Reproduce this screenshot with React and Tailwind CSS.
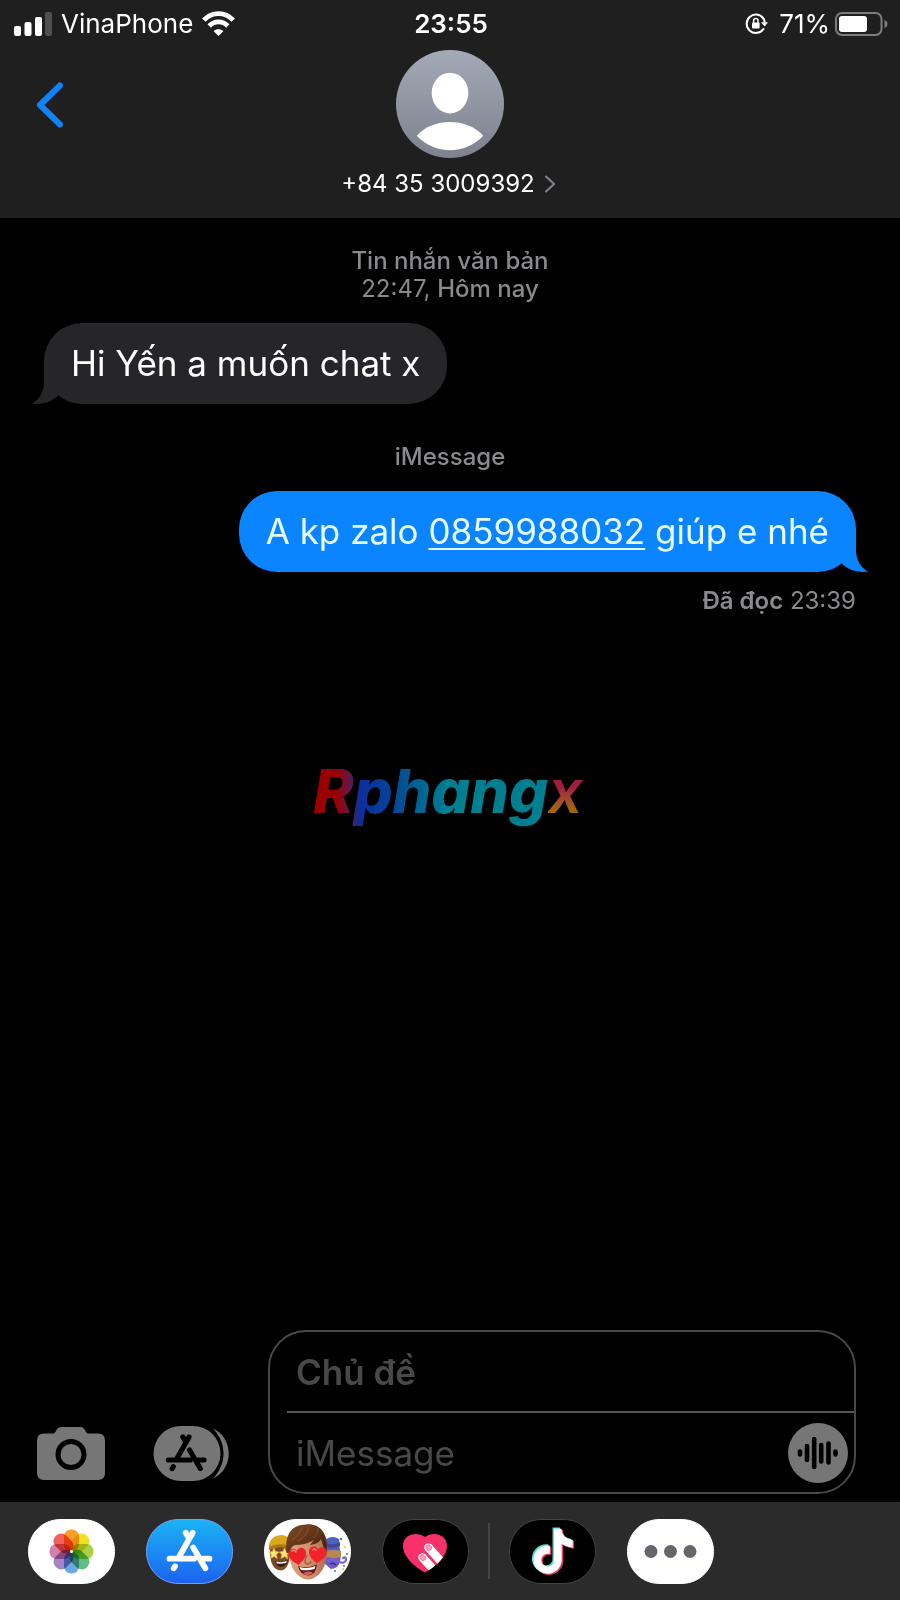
import React, { useState } from 'react'
import { clsx } from 'clsx'

const TIKTOK_NOTE = 'M12.525.02c1.31-.02 2.61-.01 3.91-.02.08 1.53.63 3.09 1.75 4.17 1.12 1.11 2.7 1.62 4.24 1.79v4.03c-1.44-.05-2.89-.35-4.2-.97-.57-.26-1.1-.59-1.62-.93-.01 2.92.01 5.84-.02 8.75-.08 1.4-.54 2.79-1.35 3.94-1.31 1.92-3.58 3.17-5.91 3.21-1.43.08-2.86-.31-4.08-1.03-2.02-1.19-3.44-3.37-3.65-5.71-.02-.5-.03-1-.01-1.49.18-1.9 1.12-3.72 2.58-4.96 1.66-1.44 3.98-2.13 6.15-1.72.02 1.48-.04 2.96-.04 4.44-.99-.32-2.15-.23-3.02.37-.63.41-1.11 1.04-1.36 1.75-.21.51-.15 1.07-.14 1.61.24 1.64 1.82 3.02 3.5 2.87 1.12-.01 2.19-.66 2.77-1.61.19-.33.4-.67.41-1.06.1-1.79.06-3.57.07-5.36.01-4.03-.01-8.05.02-12.07z'

const HEART = 'M0 10C-6 6-10 2-10-3C-10-9-3-11 0-6C3-11 10-9 10-3C10 2 6 6 0 10Z'

const PETALS = ['#f79a1e', '#efdf1c', '#a5cf3d', '#5cb87a', '#64a5dc', '#a07fc0', '#cf7ba8', '#ef5a52']

function SignalIcon() {
  return (
    <svg viewBox="0 0 38 24" className="h-6 w-[38px]" fill="#fff">
      <rect x="0" y="14" width="7" height="10" rx="2" />
      <rect x="10.5" y="10" width="7" height="14" rx="2" />
      <rect x="21" y="5" width="7" height="19" rx="2" />
      <rect x="31" y="0" width="7" height="24" rx="2" fill="#505050" />
    </svg>
  )
}

function WifiIcon() {
  return (
    <svg viewBox="0 0 33 25" className="h-[25px] w-[33px]" fill="none" stroke="#fff" strokeWidth="4.8">
      <path d="M1.8 9.2C10 .4 23 .4 31.2 9.2" />
      <path d="M7.2 15C12.500 9.600 20.500 9.600 25.800 15" />
      <path d="M16.500 25l-4.800-4.800c2.600-2.600 7-2.600 9.600 0z" fill="#fff" stroke="none" />
    </svg>
  )
}

function RotationLockIcon() {
  return (
    <svg viewBox="0 0 23 22" className="h-[22px] w-[23px]" fill="none" stroke="#fff">
      <path d="M18.3 5.3A9.2 9.2 0 1 0 18.4 16" strokeWidth="2" strokeLinecap="round" />
      <path d="M18.3 5.3q1.2 1.8 1.4 4" strokeWidth="2" />
      <path d="M16 9.2h7l-3.4 4.4z" fill="#fff" stroke="none" />
      <rect x="7" y="9.5" width="7.6" height="6" rx="1" fill="#fff" stroke="none" />
      <path d="M8.6 10V7.8a2.2 2.2 0 0 1 4.4 0V10" strokeWidth="1.5" />
    </svg>
  )
}

function BatteryIcon() {
  return (
    <svg viewBox="0 0 53 24" className="h-6 w-[53px]">
      <rect x="1" y="1" width="45.5" height="22" rx="6" fill="none" stroke="#7d7d7d" strokeWidth="2" />
      <rect x="4" y="4" width="28" height="16" rx="3" fill="#fff" />
      <path d="M49.5 8c4 1.2 4 6.800 0 8z" fill="#7d7d7d" />
    </svg>
  )
}

function Avatar() {
  return (
    <svg viewBox="0 0 109 109" className="size-[108px]">
      <defs>
        <linearGradient id="avatar" x1="0" y1="0" x2="0" y2="1">
          <stop offset="0" stopColor="#a4a9b7" />
          <stop offset="1" stopColor="#7e828e" />
        </linearGradient>
      </defs>
      <circle cx="54.5" cy="54.5" r="54.5" fill="url(#avatar)" />
      <ellipse cx="54.5" cy="43.500" rx="18.500" ry="20.500" fill="#fff" />
      <path d="M21 86.500C37 68 72 68 88 86.500C70 106 39 106 21 86.500Z" fill="#fff" />
    </svg>
  )
}

function Tail({ className }) {
  return (
    <svg viewBox="0 0 30 40" className={clsx('absolute bottom-0 h-[40px] w-[30px]', className)} fill="currentColor">
      <path d="M12 0V18C12 28 7 36 0 39.500C10 41 20 38 26 31.500L30 0Z" />
    </svg>
  )
}

function Bubble({ mine, children }) {
  return (
    <div className={clsx('relative flex h-[81px] items-center rounded-[38px] px-[27px] text-[35px]', mine ? 'self-end bg-[#0a84ff] text-[#e6fcff]' : 'self-start bg-[#262628] text-white')}>
      <Tail className={mine ? '-right-3 -scale-x-100 text-[#0a84ff]' : '-left-3 text-[#262628]'} />
      <p className="relative whitespace-nowrap">{children}</p>
    </div>
  )
}

function CameraIcon() {
  return (
    <svg viewBox="0 0 68 53" className="h-[53px] w-[68px]">
      <path d="M7 6.500H16.500C19 6.500 19 0 24.500 0H43C48.500 0 48.500 6.500 51 6.500H61Q68 6.500 68 13.500V46Q68 53 61 53H7Q0 53 0 46V13.500Q0 6.500 7 6.500Z" fill="#767676" />
      <circle cx="34" cy="27.500" r="13" fill="none" stroke="#000" strokeWidth="5" />
    </svg>
  )
}

function AppStoreMark() {
  return (
    <g fill="none" stroke="currentColor" strokeWidth="5.8" strokeLinecap="round">
      <path d="M46.700 13.700L32.500 39" />
      <path d="M39.700 13.700L42.500 18.500" />
      <path d="M29 47.200L27.700 49.300" />
      <path d="M47.200 28.500L59.300 49.300" />
      <path d="M23.500 39.700H48" />
      <path d="M57 39.700H63.500" />
    </g>
  )
}

function DrawerIcon() {
  return (
    <svg viewBox="0 0 76 55" className="h-[55px] w-[76px]">
      <path d="M28 0H40A27.500 27.500 0 0 1 40 55H28A27.500 27.500 0 0 1 28 0Z" fill="#767676" />
      <path d="M60 2.500C81 12 81 43 60 52.500C74 38 74 17 60 2.500Z" fill="#767676" />
      <g transform="translate(-5.500 -1.300) scale(.89)" className="text-black">
        <AppStoreMark />
      </g>
    </svg>
  )
}

function VoiceIcon() {
  return (
    <svg viewBox="0 0 60 60" className="size-[60px]">
      <circle cx="30" cy="30" r="30" fill="#767676" />
      <g stroke="#000" strokeWidth="4.600" strokeLinecap="round">
        <path d="M12 28.500V31.500M19 23V37M26.200 16V44M33.200 22V38.500M40.500 20.500V39.500M47.500 28.500V31.500" />
      </g>
    </svg>
  )
}

function Pill({ children, fill, stroke }) {
  return (
    <svg viewBox="0 0 87 65" className="h-[65px] w-[87px]">
      <path d="M33 .5H54C74 .5 86.500 16 86.500 32.500S74 64.500 54 64.500H33C13 64.500 .5 49 .5 32.500S13 .5 33 .5Z" fill={fill} stroke={stroke} />
      {children}
    </svg>
  )
}

function PhotosApp() {
  return (
    <Pill fill="#fff" stroke="#fff">
      <g transform="translate(43.500 32.500)" className="isolate">
        {PETALS.map((color, i) => (
          <rect key={color} x="-7.500" y="-22" width="15" height="21.500" rx="7" fill={color} fillOpacity=".95" transform={`rotate(${i * 45})`} className="mix-blend-multiply" />
        ))}
        <circle r="1.500" fill="#fff" />
      </g>
    </Pill>
  )
}

function AppStoreApp() {
  return (
    <Pill fill="url(#store)" stroke="#7c9ff0">
      <defs>
        <linearGradient id="store" x1="0" y1="0" x2="0" y2="1">
          <stop offset="0" stopColor="#19b4f5" />
          <stop offset="1" stopColor="#1c62f0" />
        </linearGradient>
      </defs>
      <g className="text-white"><AppStoreMark /></g>
    </Pill>
  )
}

function MemojiApp() {
  return (
    <Pill fill="#fff" stroke="#fff">
      <defs>
        <linearGradient id="hair" x1="0" y1="0" x2="1" y2="1">
          <stop offset="0" stopColor="#7d4a28" />
          <stop offset=".5" stopColor="#633518" />
          <stop offset="1" stopColor="#3f200f" />
        </linearGradient>
        <linearGradient id="skin" x1="0" y1="0" x2="1" y2="0">
          <stop offset="0" stopColor="#dfa380" />
          <stop offset=".6" stopColor="#cd8e6b" />
          <stop offset="1" stopColor="#a96b4b" />
        </linearGradient>
      </defs>

      {/* star-eyed friend in the yellow beanie */}
      <path d="M6 28Q5 51 17 51.500Q26 51 27 28Z" fill="#7a4a2a" />
      <path d="M5 30C4 20 11 16 18 16Q25 17 27 22V28Q16 24 5 30Z" fill="#dba51c" />
      <path d="M5 28Q15 23 27 27V30Q15 26 5 31Z" fill="#a97a0e" />
      <path d="M11 42Q18 44 24 41Q22 48 17 48Q12 47 11 42Z" fill="#3d1a10" />
      <path d="M12 42.500Q18 44 23 42L22 44Q17 45 13 44.500Z" fill="#fff" />
      <path d="M10 29l1.500 3.500 3.500.5-2.500 2.500.7 4-3.200-2-3.500 2 .8-4L5 33l3.500-.5zM20.500 29l1.500 3.500 3.500.5-2.500 2.500.7 4-3.200-2-3.500 2 .8-4-2.300-2.500 3.500-.5z" fill="#ffe27a" stroke="#e5b030" strokeWidth=".8" />

      {/* wizard on the right */}
      <path d="M62 20Q69 16 75 20L76 32H62Z" fill="#5260bd" />
      <path d="M62 24Q69 27 76 23V27Q69 30 62 28Z" fill="#3e489b" />
      <path d="M61 31H76Q79 49 67 50L61 45Z" fill="#6d5ac8" />
      <path d="M62 32Q70 30 77 32V38Q70 40 62 38Z" fill="#b7894c" />
      <path d="M64 42Q70 38 75 43Q81 45 82 41Q82 37 79 39" fill="none" stroke="#7664d6" strokeWidth="2.200" strokeLinecap="round" />
      <path d="M66 45Q69 43 72 46" fill="none" stroke="#3c2a91" strokeWidth="1.500" />
      <g fill="#3b71d9">
        <circle cx="77" cy="20" r="1.200" />
        <circle cx="83" cy="35" r=".9" />
        <circle cx="71" cy="52" r="1" />
        <circle cx="80" cy="47" r=".9" />
      </g>
      <g fill="#ecc746">
        <circle cx="81" cy="28" r="1.100" />
        <circle cx="79" cy="50" r="1.100" />
        <circle cx="84" cy="44" r=".8" />
      </g>

      {/* heart-eyed face */}
      <path d="M25 25Q23 33 26 42Q29 54 38 59Q44 62 50 59Q60 53 62 41Q65 32 62 22Q45 12 25 25Z" fill="url(#skin)" />
      <path d="M22.500 34C21 17 26 6 42 5.500C57 4 65 16 62.500 33L59.500 28Q58 24 57 20Q55 25 46 26L50 21Q42 26 31 26Q26 28 25.500 34Z" fill="url(#hair)" />
      <path d="M28 21Q34 18 38 9M34 22Q43 17 45 8M50 19Q54 15 54 9" fill="none" stroke="#a0683c" strokeWidth="1" opacity=".6" />
      <path d="M43 36Q39 44 43 45Q47 45 47 42" fill="none" stroke="#a76045" strokeWidth="1.600" />
      <path d="M34 47Q43 50 53 45.500Q52 56 44 56.500Q36 56 34 47Z" fill="#641917" />
      <path d="M35.500 48Q43 50.500 51.500 47L50.500 50Q44 52 37 51Z" fill="#fff" />
      <path d="M39 54.500Q44 51 49 54Q44 58 39 54.500Z" fill="#d65b61" />
      <path d={HEART} transform="translate(33.500 37) rotate(-6) scale(.88)" fill="#ec2027" />
      <path d={HEART} transform="translate(53.500 35.500) rotate(6) scale(.88)" fill="#f0242b" />
      <path d="M28 32Q30 30 32 33M49 31Q50 29 52 31" fill="none" stroke="#ff8585" strokeWidth="1.500" strokeLinecap="round" />
    </Pill>
  )
}

function TouchApp() {
  return (
    <Pill fill="#000" stroke="#444">
      <clipPath id="heart">
        <path d="M43 53.500C34 49 21 38 21 27C21 15 35 12 43 18C51 12 65 15 65 27C65 38 52 49 43 53.500Z" />
      </clipPath>
      <g clipPath="url(#heart)">
        <rect width="87" height="65" fill="#f9316b" />
        {['translate(47 29) rotate(-42)', 'translate(41 39) rotate(-42)'].map((place) => (
          <g key={place} transform={place}>
            <rect x="-4.200" y="-5" width="8.400" height="30" rx="4.200" fill="#fff" />
            <rect x="-2.600" y="-3.500" width="5.200" height="6" rx="2.500" fill="#fb9dbc" stroke="#f05585" strokeWidth=".7" />
          </g>
        ))}
      </g>
    </Pill>
  )
}

function TikTokApp() {
  return (
    <Pill fill="#000" stroke="#444">
      <g transform="translate(20 8.500) scale(1.880)">
        <path d={TIKTOK_NOTE} fill="#4fe0d5" />
        <path d={TIKTOK_NOTE} fill="#e73e5f" transform="translate(1.600 1.200)" />
        <path d={TIKTOK_NOTE} fill="#fff" transform="translate(.8 .6)" />
      </g>
    </Pill>
  )
}

function MoreApp() {
  return (
    <Pill fill="#fff" stroke="#fff">
      <g fill="#65656b">
        <circle cx="24" cy="32.500" r="6.500" />
        <circle cx="43.500" cy="32.500" r="6.500" />
        <circle cx="63" cy="32.500" r="6.500" />
      </g>
    </Pill>
  )
}

const apps = [
  { id: 'photos', label: 'Ảnh', icon: PhotosApp },
  { id: 'store', label: 'App Store', icon: AppStoreApp },
  { id: 'memoji', label: 'Memoji', icon: MemojiApp },
  { id: 'touch', label: 'Digital Touch', icon: TouchApp },
]

const moreApps = [
  { id: 'tiktok', label: 'TikTok', icon: TikTokApp },
  { id: 'more', label: 'Thêm', icon: MoreApp },
]

function AppButton({ app }) {
  const Icon = app.icon
  return (
    <button type="button" aria-label={app.label} className="shrink-0"><Icon /></button>
  )
}

export default function App() {
  const [subject, setSubject] = useState('')
  const [message, setMessage] = useState('')

  return (
    <div className="relative flex min-h-screen flex-col bg-black font-['Inter','Noto_Sans',sans-serif] text-white">
      <header className="h-[218px] bg-[#1f1f1f]">
        <div className="grid h-[47px] grid-cols-3 items-center pr-3 pl-[14px] text-[26px]">
          <div className="flex items-center gap-[9px]">
            <SignalIcon />
            <span>VinaPhone</span>
            <WifiIcon />
          </div>
          <span className="text-center font-semibold">23:55</span>
          <div className="flex items-center justify-end gap-[5px]">
            <RotationLockIcon />
            <span className="pl-[6px]">71%</span>
            <BatteryIcon />
          </div>
        </div>
        <div className="grid grid-cols-[1fr_auto_1fr] items-start pt-[3px]">
          <button type="button" aria-label="Quay lại" className="ml-9 w-[28px] pt-8">
            <svg viewBox="0 0 28 46" className="h-[46px] w-[28px]" fill="none" stroke="#0f84f8" strokeWidth="6" strokeLinecap="round" strokeLinejoin="round">
              <path d="M24 3.500L4 23L24 42.500" />
            </svg>
          </button>
          <button type="button" className="flex flex-col items-center gap-[11px]">
            <Avatar />
            <span className="flex items-center gap-[10px] pr-1 text-[24px] leading-[30px]">
              +84 35 3009392
              <svg viewBox="0 0 10 18" className="h-[18px] w-[10px]" fill="none" stroke="#818389" strokeWidth="2" strokeLinecap="round">
                <path d="M1 1.500L9 9L1 16.500" />
              </svg>
            </span>
          </button>
        </div>
      </header>

      <main className="flex flex-1 flex-col px-11 pt-[29px]">
        <p className="text-center text-[24px] leading-[28px] text-[#8a8a8e]">
          <span className="font-medium">Tin nhắn văn bản</span><br />
          22:47, <span className="font-medium">Hôm nay</span>
        </p>
        <div className="mt-5 flex flex-col">
          <Bubble>Hi Yến a muốn chat x</Bubble>
        </div>
        <p className="mt-[39px] text-center text-[24px] leading-[28px] font-medium text-[#8a8a8e]">iMessage</p>
        <div className="mt-5 flex flex-col">
          <Bubble mine>
            A kp zalo <a href="tel:0859988032" className="underline decoration-2 underline-offset-4">0859988032</a> giúp e nhé
          </Bubble>
        </div>
        <p className="mt-[15px] text-right text-[24px] leading-[28px] text-[#8a8a8e]"><span className="font-semibold">Đã đọc</span> 23:39</p>
      </main>

      <div className="pointer-events-none absolute inset-0 flex items-center justify-center pb-4">
        <span className="bg-linear-[90deg,#9b0000_10%,#6b1440_15%,#0b2f9c_20%,#06409a_32%,#005c91_42%,#007f91_58%] bg-clip-text text-[61px] font-extrabold italic text-transparent">Rphang</span>
        <span className="bg-linear-to-b from-[#a11d3c] from-45% to-[#a36500] to-70% bg-clip-text pr-1 text-[61px] font-semibold italic text-transparent">x</span>
      </div>

      <form className="flex items-end pr-11 pb-2 pl-[37px]" onSubmit={(e) => e.preventDefault()}>
        <button type="button" aria-label="Máy ảnh" className="mb-[14px] shrink-0"><CameraIcon /></button>
        <button type="button" aria-label="Ứng dụng" className="mb-[13px] ml-[48px] shrink-0"><DrawerIcon /></button>
        <div className="ml-[39px] min-w-0 flex-1 rounded-[38px] border-2 border-[#48484a]">
          <input
            aria-label="Chủ đề"
            value={subject}
            onChange={(e) => setSubject(e.target.value)}
            placeholder="Chủ đề"
            className="block h-[79px] w-full bg-transparent px-[26px] text-[35px] font-semibold outline-none placeholder:text-[#48484a]"
          />
          <div className="ml-[17px] h-[2px] bg-[#555557]" />
          <div className="flex h-[79px] items-center pr-[6px]">
            <input
              aria-label="iMessage"
              value={message}
              onChange={(e) => setMessage(e.target.value)}
              placeholder="iMessage"
              className="h-full min-w-0 flex-1 bg-transparent pl-[26px] text-[35px] outline-none placeholder:text-[#48484a]"
            />
            <button type="button" aria-label="Ghi âm" className="shrink-0"><VoiceIcon /></button>
          </div>
        </div>
      </form>

      <nav className="flex h-[98px] items-center gap-[31px] bg-[#2b2b2b] px-7">
        {apps.map((app) => <AppButton key={app.id} app={app} />)}
        <div className="-mx-3 h-14 w-[2px] bg-[#454547]" />
        {moreApps.map((app) => <AppButton key={app.id} app={app} />)}
      </nav>
    </div>
  )
}
